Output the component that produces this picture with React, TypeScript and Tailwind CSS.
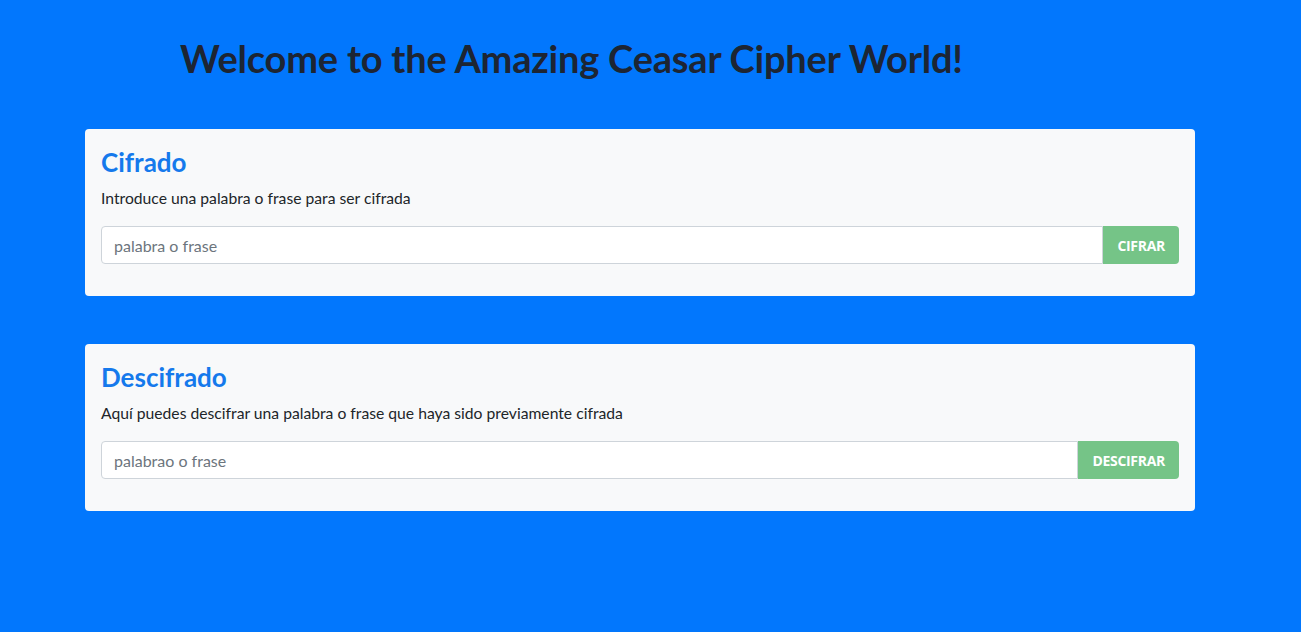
export default function App() {
  return (
    <div className="min-h-screen w-full bg-[#0277fd] font-['Lato','Open_Sans',sans-serif]">
      {/* cabecera */}
      <div className="pl-[180px] pt-[34px]">
        <h1 className="text-[38px] leading-[48px] font-bold text-[#1d2533] tracking-[-0.2px]">
          Welcome to the Amazing Ceasar Cipher World!
        </h1>
      </div>

      <div className="ml-[85px] w-[1110px] mt-[47px] flex flex-col gap-[48px]">
        <Card
          title="Cifrado"
          text="Introduce una palabra o frase para ser cifrada"
          placeholder="palabra o frase"
          button="CIFRAR"
        />
        <Card
          title="Descifrado"
          text="Aquí puedes descifrar una palabra o frase que haya sido previamente cifrada"
          placeholder="palabrao o frase"
          button="DESCIFRAR"
        />
      </div>
    </div>
  );
}

function Card({
  title,
  text,
  placeholder,
  button,
}: {
  title: string;
  text: string;
  placeholder: string;
  button: string;
}) {
  return (
    <section className="bg-[#f8f9fa] rounded-[4px] p-4 h-[167px]">
      <h3 className="text-[26px] leading-[34px] font-bold text-[#1579ec]">{title}</h3>
      <p className="mt-[8px] text-[15.7px] leading-[22px] text-[#212529]">{text}</p>
      <div className="mt-[17px] flex h-[38px]">
        <input
          className="flex-1 h-full bg-white border border-[#ced4da] rounded-l-[4px] px-3 text-[16px] text-[#495057] placeholder:text-[#6c757d] outline-none"
          placeholder={placeholder}
        />
        <button className="h-full px-[14px] bg-[#75c487] rounded-r-[4px] text-white text-[14px] font-bold font-['Open_Sans',sans-serif] tracking-[-0.3px]">
          {button}
        </button>
      </div>
    </section>
  );
}
